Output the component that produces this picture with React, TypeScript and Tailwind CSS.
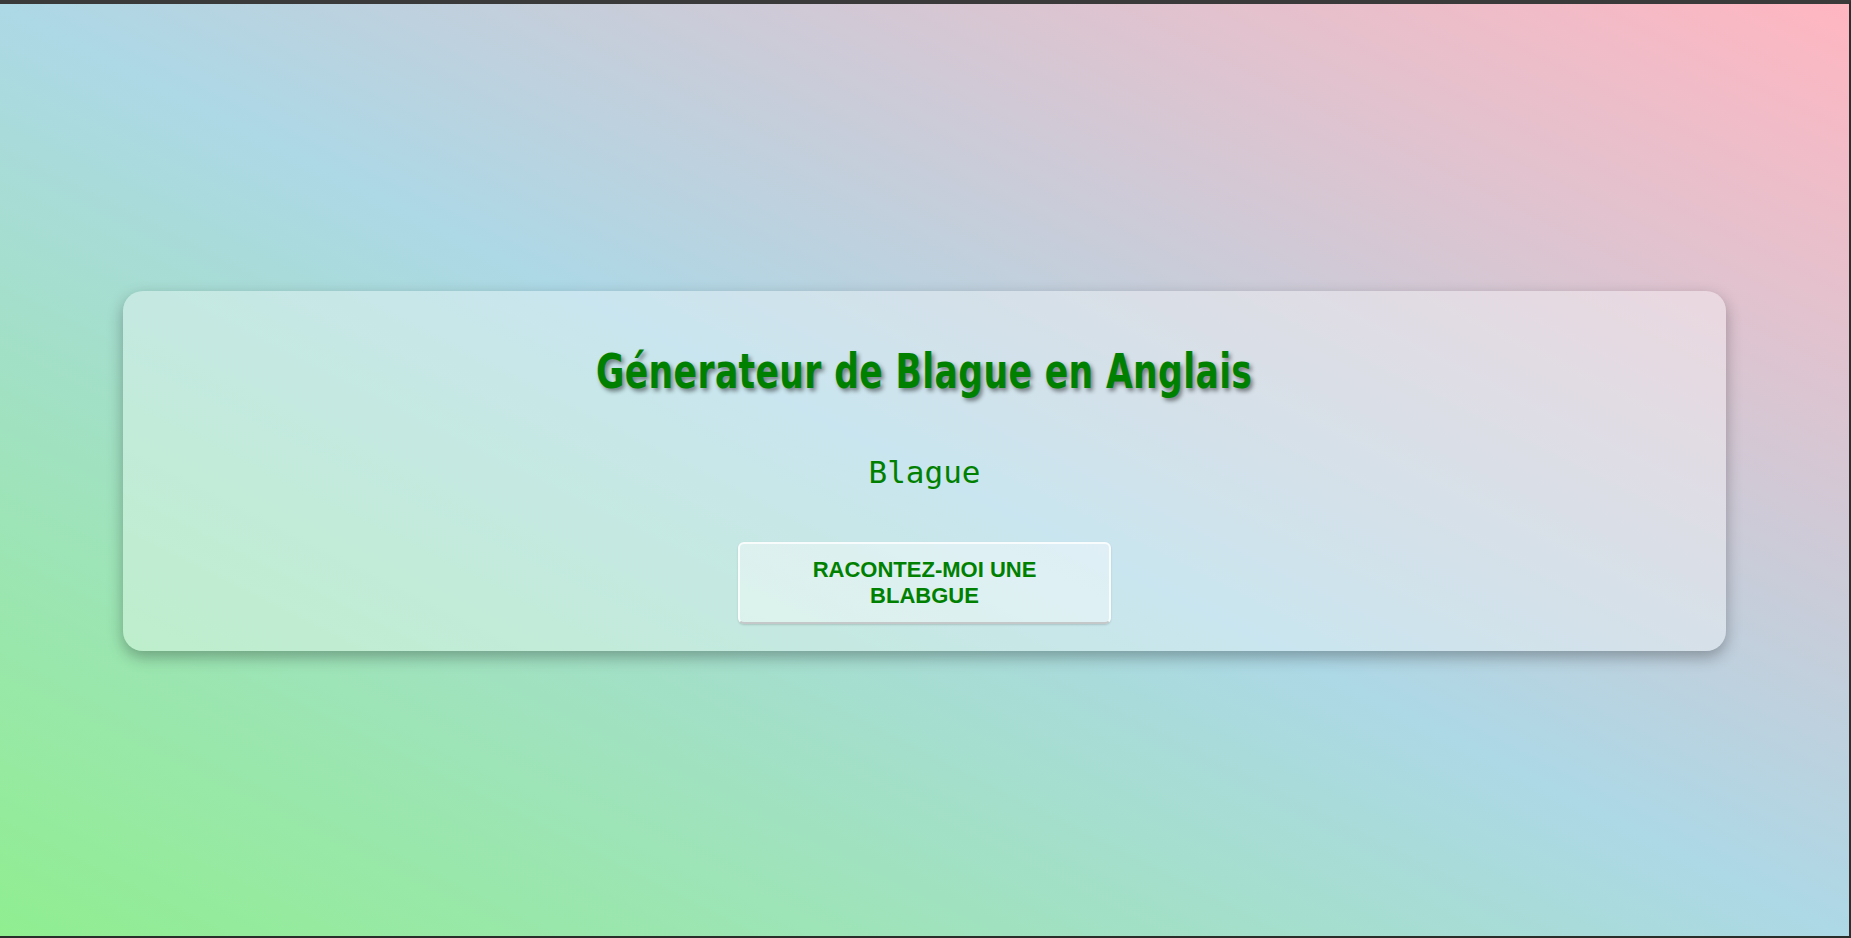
const App = () => {
  return (
    <div className="flex h-[938px] w-full items-center justify-center border-t-4 border-r-2 border-b-2 border-t-[#3a3a3a] border-r-[#2e2e2e] border-b-[#2a2e2a] bg-[linear-gradient(to_top_right,#90ee90,#add8e6,#ffb6c1)]">
      <div className="mt-[2px] flex h-[360px] w-[1603px] flex-col items-center rounded-[20px] bg-white/35 pt-[52px] shadow-[0_6px_16px_rgba(0,0,0,0.3)]">
        <h1 className="origin-center scale-x-[0.8] font-['DejaVu_Sans_Condensed','DejaVu_Sans',sans-serif] text-[48px] leading-[56px] font-bold tracking-[0.5px] text-[#008000] [text-shadow:3px_3px_5px_rgba(0,0,0,0.45)]">
          Génerateur de Blague en Anglais
        </h1>
        <p className="mt-[55px] font-['DejaVu_Sans_Mono',monospace] text-[31px] leading-[36px] text-[#008000]">
          Blague
        </p>
        <button className="mt-[52px] h-[82px] w-[373px] rounded-[6px] border-2 border-white/80 border-b-[#c4c8c8] bg-white/40 px-[40px] font-['Liberation_Sans',Arial,sans-serif] text-[22px] leading-[26px] font-bold text-[#008000] uppercase shadow-[0_1px_2px_rgba(0,0,0,0.15)]">
          Racontez-moi une blabgue
        </button>
      </div>
    </div>
  );
};

export default App;
